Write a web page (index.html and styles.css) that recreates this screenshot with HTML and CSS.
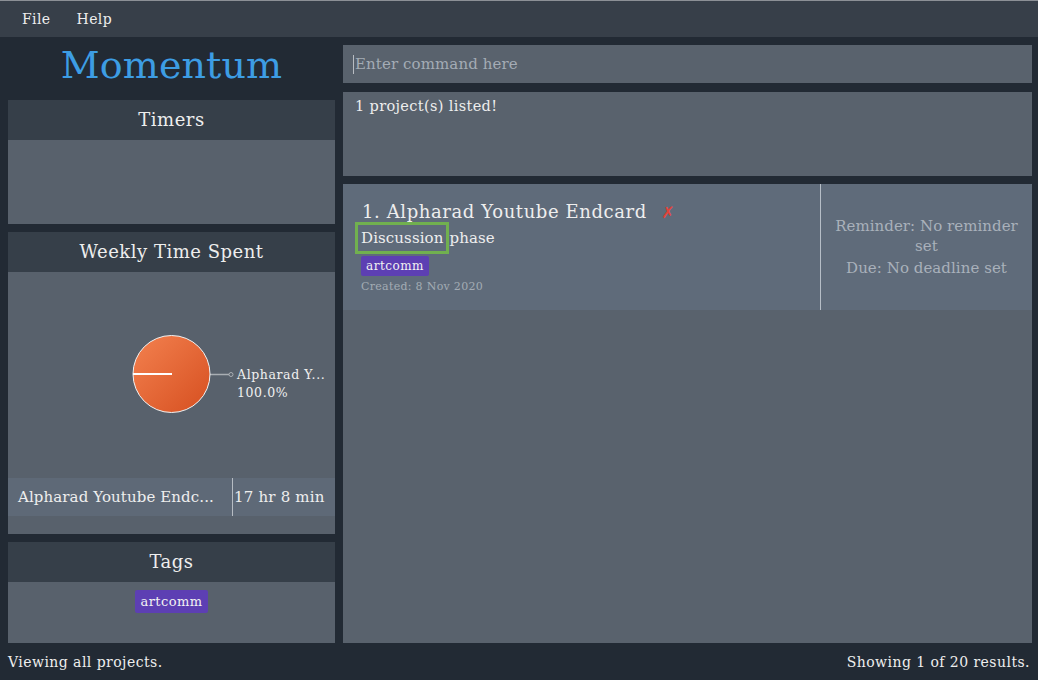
FILE: index.html
```html
<!DOCTYPE html>
<html>
<head>
<meta charset="utf-8">
<link rel="stylesheet" href="styles.css">
</head>
<body>
<div class="window">
  <div class="menubar">
    <span class="menu-item">File</span>
    <span class="menu-item">Help</span>
  </div>
  <div class="main">
    <div class="left">
      <div class="brand">Momentum</div>
      <div class="panel timers">
        <div class="panel-head">Timers</div>
        <div class="panel-body"></div>
      </div>
      <div class="panel weekly">
        <div class="panel-head">Weekly Time Spent</div>
        <div class="panel-body weekly-body">
          <div class="chart">
            <svg width="327" height="206" viewBox="0 0 327 206">
              <defs>
                <linearGradient id="pg" x1="0" y1="0" x2="1" y2="1">
                  <stop offset="0" stop-color="#f3814f"/>
                  <stop offset="1" stop-color="#d64f20"/>
                </linearGradient>
              </defs>
              <line x1="202" y1="102.5" x2="221" y2="102.5" stroke="#a9aeb3" stroke-width="1.5"/>
              <circle cx="223" cy="102.5" r="2" fill="none" stroke="#a9aeb3" stroke-width="1"/>
              <circle cx="163.5" cy="102" r="38.5" fill="url(#pg)" stroke="#f2f2f2" stroke-width="1"/>
              <line x1="125" y1="102" x2="164" y2="102" stroke="#ffffff" stroke-width="1.8"/>
              <text x="229" y="107" class="pie-label">Alpharad Y...</text>
              <text x="229" y="125" class="pie-label">100.0%</text>
            </svg>
          </div>
          <div class="time-row">
            <div class="time-name">Alpharad Youtube Endc...</div>
            <div class="time-val">17 hr 8 min</div>
          </div>
        </div>
      </div>
      <div class="panel tags">
        <div class="panel-head">Tags</div>
        <div class="panel-body tags-body">
          <span class="tag">artcomm</span>
        </div>
      </div>
    </div>
    <div class="right">
      <div class="command"><span class="caret"></span><span class="placeholder">Enter command here</span></div>
      <div class="result">1 project(s) listed!</div>
      <div class="list">
        <div class="card">
          <div class="card-main">
            <div class="card-title">1. Alpharad Youtube Endcard <span class="x">✗</span></div>
            <div class="card-phase"><span class="focus">Discussion</span>phase</div>
            <div class="card-tags"><span class="tag small">artcomm</span></div>
            <div class="created">Created: 8 Nov 2020</div>
          </div>
          <div class="card-side">
            <div class="side-line first">Reminder: No reminder set</div>
            <div class="side-line">Due: No deadline set</div>
          </div>
        </div>
      </div>
    </div>
  </div>
  <div class="statusbar">
    <span>Viewing all projects.</span>
    <span>Showing 1 of 20 results.</span>
  </div>
</div>
</body>
</html>
```

FILE: styles.css
```css
* { box-sizing: border-box; }
html, body { margin: 0; padding: 0; }
body {
  width: 1038px;
  height: 680px;
  background: #222a34;
  font-family: "DejaVu Serif", "Liberation Serif", serif;
  color: #eeeeee;
  overflow: hidden;
}
.window {
  width: 1038px;
  height: 680px;
  display: flex;
  flex-direction: column;
  border-top: 1px solid #8c9096;
}
.menubar {
  height: 36px;
  flex: none;
  background: #373f49;
  display: flex;
  align-items: center;
  padding-left: 22px;
  gap: 26px;
  font-size: 14px;
  letter-spacing: 0.4px;
}
.main {
  display: flex;
  gap: 8px;
  padding: 8px 6px 0 8px;
  height: 606px;
  flex: none;
}
.left {
  width: 327px;
  display: flex;
  flex-direction: column;
}
.brand {
  height: 63px;
  flex: none;
  margin-top: -8px;
  text-align: center;
  color: #3d9de4;
  font-size: 38px;
  letter-spacing: 0.1px;
  line-height: 56px;
}
.panel { display: flex; flex-direction: column; margin-bottom: 8px; flex: none; }
.panel-head {
  height: 40px;
  background: #363f49;
  text-align: center;
  font-size: 18px;
  line-height: 40px;
  letter-spacing: 0.5px;
}
.panel-body { background: #58616c; flex: 1; }
.timers { height: 124px; }
.weekly { height: 302px; }
.tags { height: 101px; margin-bottom: 0; }
.weekly-body { display: flex; flex-direction: column; }
.chart { height: 206px; }
.chart svg { display: block; }
.pie-label { fill: #f0f0f0; font-family: "DejaVu Serif", serif; font-size: 12.5px; letter-spacing: 0.6px; }
.time-row {
  height: 38px;
  background: #5e6977;
  display: flex;
  font-size: 15px;
  letter-spacing: 0.1px;
}
.time-name {
  width: 225px;
  padding-left: 10px;
  line-height: 38px;
  border-right: 1px solid #b6bcc3;
  white-space: nowrap;
}
.time-val { flex: 1; line-height: 38px; padding-left: 1px; white-space: nowrap; letter-spacing: 0.2px; }
.tags-body { display: flex; justify-content: center; padding-top: 8px; align-items: flex-start; }
.tag {
  background: #5d3fb3;
  color: #f2f2f2;
  font-size: 13px;
  letter-spacing: 0.4px;
  padding: 0 6px;
  height: 23px;
  line-height: 23px;
  border-radius: 2px;
  display: inline-block;
}
.tag.small { height: 20px; line-height: 20px; font-size: 12px; padding: 0 5px; letter-spacing: 0.5px; }
.right {
  flex: 1;
  display: flex;
  flex-direction: column;
}
.command {
  height: 38px;
  flex: none;
  background: #59626d;
  display: flex;
  align-items: center;
  padding-left: 10px;
  font-size: 15px;
  letter-spacing: 0.1px;
}
.caret { width: 1px; height: 19px; background: #b8bcc2; margin-right: 1px; }
.placeholder { color: #a4acb5; }
.result {
  margin-top: 9px;
  height: 84px;
  flex: none;
  background: #59626d;
  padding: 6px 12px;
  font-size: 14.5px;
  letter-spacing: 0.35px;
}
.list {
  margin-top: 8px;
  flex: 1;
  background: #59626d;
}
.card {
  height: 126px;
  background: #5f6b7a;
  display: flex;
}
.card-main { width: 478px; padding: 14px 0 0 12px; border-right: 1px solid #b6bec7; }
.card-title { font-size: 18px; letter-spacing: 0.6px; padding-left: 7px; height: 28px; line-height: 28px; white-space: nowrap; }
.x { color: #e2433a; font-size: 16px; margin-left: 8px; font-family: "DejaVu Sans", sans-serif; font-weight: bold; }
.card-phase { font-size: 15px; letter-spacing: 0.1px; height: 32px; line-height: 32px; display: flex; margin-top: -4px; }
.focus { border: 3px solid #71b04f; padding: 0 3px 0 3px; height: 32px; line-height: 26px; }
.card-tags { padding-left: 6px; height: 20px; margin-top: 1px; }
.created { padding-left: 6px; font-size: 11px; color: #a3abb4; letter-spacing: 0.3px; margin-top: 5px; }
.card-side {
  flex: 1;
  display: flex;
  flex-direction: column;
  align-items: center;
  justify-content: center;
  padding: 0 6px 0;
  text-align: center;
  color: #a9b1bb;
  font-size: 15px;
  letter-spacing: 0.05px;
  line-height: 20px;
}
.side-line.first { margin-bottom: 2px; width: 186px; }
.statusbar {
  flex: 1;
  display: flex;
  justify-content: space-between;
  align-items: center;
  padding: 0 8px 0 8px;
  font-size: 14px;
  letter-spacing: 0.45px;
}
```
